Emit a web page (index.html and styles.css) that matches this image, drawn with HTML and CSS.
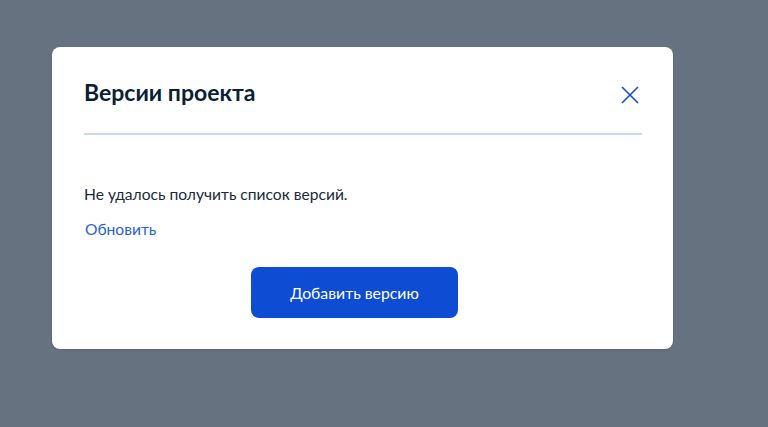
FILE: index.html
```html
<!DOCTYPE html>
<html lang="ru">
<head>
<meta charset="utf-8">
<title>Версии проекта</title>
<link rel="stylesheet" href="styles.css">
</head>
<body>
<div class="overlay">
  <div class="modal">
    <div class="modal-header">
      <h2 class="modal-title">Версии проекта</h2>
      <button class="close-btn" aria-label="Закрыть">
        <svg width="18" height="18" viewBox="0 0 18 18" fill="none">
          <path d="M1 1L17 17M17 1L1 17" stroke="#0d4cd3" stroke-width="1.6"/>
        </svg>
      </button>
    </div>
    <div class="divider"></div>
    <div class="modal-body">
      <p class="error-text">Не удалось получить список версий.</p>
      <a class="refresh-link" href="#">Обновить</a>
      <div class="actions">
        <button class="primary-btn">Добавить версию</button>
      </div>
    </div>
  </div>
</div>
</body>
</html>
```
FILE: styles.css
```css
* { box-sizing: border-box; }
html, body {
  margin: 0;
  padding: 0;
  height: 100%;
}
body {
  background: #66727f;
  font-family: Lato, "Noto Sans", sans-serif;
  color: #0b1f33;
}
.overlay {
  padding: 47px 0 0 52px;
}
.modal {
  width: 621px;
  background: #ffffff;
  border-radius: 8px;
  padding: 31px 31px 31px 32px;
  box-shadow: 0 1px 2px rgba(0,0,0,0.12);
}
.modal-header {
  display: flex;
  justify-content: space-between;
  align-items: flex-start;
  padding-bottom: 27px;
}
.modal-title {
  margin: 0;
  font-size: 23px;
  line-height: 28px;
  font-weight: 700;
  color: #0b1f33;
}
.close-btn {
  border: 0;
  background: none;
  padding: 0;
  margin: 8px 3px 0 0;
  width: 18px;
  height: 18px;
  cursor: pointer;
  display: block;
}
.close-btn svg { display: block; }
.divider {
  height: 2px;
  background: #c8d7f3;
}
.modal-body {
  padding-top: 47px;
}
.error-text {
  margin: 0;
  font-size: 15.6px;
  line-height: 24px;
  color: #1a2a3c;
}
.refresh-link {
  display: block;
  margin-top: 11px;
  margin-left: 1px;
  font-size: 15.6px;
  line-height: 24px;
  color: #2763d8;
  text-decoration: none;
}
.actions {
  margin-top: 26px;
  padding-left: 167px;
}
.primary-btn {
  width: 207px;
  height: 51px;
  border: 0;
  border-radius: 8px;
  background: #0d4cd3;
  color: #ffffff;
  font-family: Lato, "Noto Sans", sans-serif;
  font-size: 15.8px;
  line-height: 24px;
  cursor: pointer;
}
```
